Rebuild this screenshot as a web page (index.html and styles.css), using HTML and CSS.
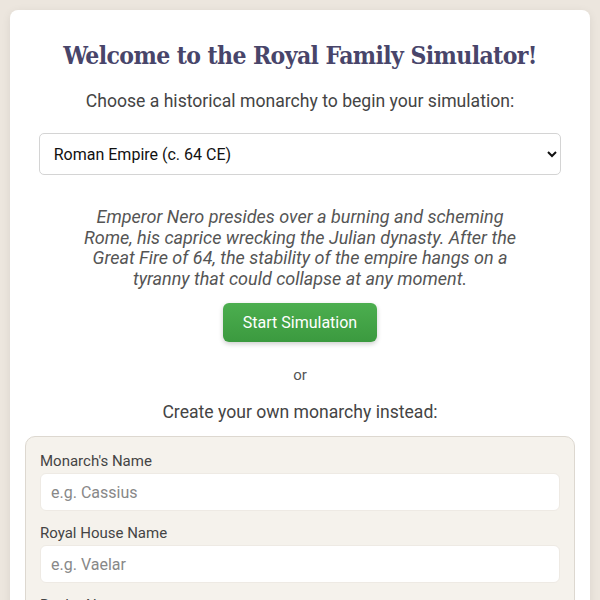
FILE: index.html
```html
<!DOCTYPE html>
<html lang="en">
<head>
    <meta charset="UTF-8">
    <meta name="viewport" content="width=device-width, initial-scale=1.0">
    <title>Royal Family Simulator</title>
    <link rel="stylesheet" href="styles.css">
</head>
<body>
    <div class="card">
        <h1 class="title">Welcome to the Royal Family Simulator!</h1>
        <p class="prompt">Choose a historical monarchy to begin your simulation:</p>

        <select class="monarchySelect" id="monarchy-select">
            <option>Roman Empire (c. 64 CE)</option>
            <option>Kingdom of England (c. 1483)</option>
            <option>Kingdom of France (c. 1789)</option>
        </select>

        <p class="description">Emperor Nero presides over a burning and scheming Rome, his caprice wrecking the Julian dynasty. After the Great Fire of 64, the stability of the empire hangs on a tyranny that could collapse at any moment.</p>

        <button class="startButton">Start Simulation</button>

        <p class="divider">or</p>
        <p class="prompt">Create your own monarchy instead:</p>

        <div class="customPanel">
            <label class="fieldLabel" for="monarch-name">Monarch's Name</label>
            <input class="textField" id="monarch-name" type="text" placeholder="e.g. Cassius">

            <label class="fieldLabel" for="house-name">Royal House Name</label>
            <input class="textField" id="house-name" type="text" placeholder="e.g. Vaelar">

            <label class="fieldLabel" for="realm-name">Realm Name</label>
            <input class="textField" id="realm-name" type="text" placeholder="e.g. Eldoria">
        </div>
    </div>
</body>
</html>
```

FILE: styles.css
```css
body {
    font-family: 'Roboto', 'Liberation Sans', sans-serif;
    margin: 0;
    padding: 10px;
    background-color: #ece6de;
    color: #444;
}

.card {
    background-color: #fff;
    border-radius: 8px;
    box-shadow: 0 2px 10px rgba(0, 0, 0, 0.08);
    padding: 29px 15px 20px;
    text-align: center;
}

.title {
    font-family: 'DejaVu Serif Condensed', 'DejaVu Serif', serif;
    font-stretch: condensed;
    font-size: 24.5px;
    font-weight: bold;
    letter-spacing: -0.6px;
    color: #48456a;
    margin: 0 0 17px;
    line-height: 34px;
    white-space: nowrap;
}

.prompt {
    font-size: 17.6px;
    margin: 0;
    line-height: 22px;
}

.monarchySelect {
    display: block;
    width: 95%;
    height: 42px;
    margin: 21px auto 0;
    padding: 0 10px;
    font-family: inherit;
    font-size: 16px;
    color: #111;
    background-color: #fff;
    border: 1px solid #d4d4d4;
    border-radius: 5px;
}

.description {
    font-size: 18px;
    font-style: italic;
    color: #555;
    line-height: 20.5px;
    max-width: 450px;
    margin: 32px auto 14px;
}

.startButton {
    font-family: inherit;
    font-size: 16px;
    color: #fff;
    background: linear-gradient(#4cae4f, #3b9a3f);
    border: none;
    border-radius: 6px;
    padding: 0 20px;
    height: 39px;
    box-shadow: 0 2px 5px rgba(0, 0, 0, 0.2);
    cursor: pointer;
}

.divider {
    font-size: 15px;
    color: #555;
    margin: 24px 0 17px;
}

.customPanel {
    background-color: #f5f2ec;
    border: 1px solid #ddd8d0;
    border-radius: 10px;
    margin-top: 13px;
    padding: 15px 14px 20px;
    text-align: left;
}

.fieldLabel {
    display: block;
    font-size: 15px;
    color: #444;
    margin: 0 0 3px;
}

.textField {
    display: block;
    box-sizing: border-box;
    width: 100%;
    height: 38px;
    margin-bottom: 13px;
    padding: 0 10px;
    font-family: inherit;
    font-size: 16px;
    color: #333;
    background-color: #fff;
    border: 1px solid #eeeae4;
    border-radius: 6px;
}

.textField::placeholder {
    color: #888;
}
```
